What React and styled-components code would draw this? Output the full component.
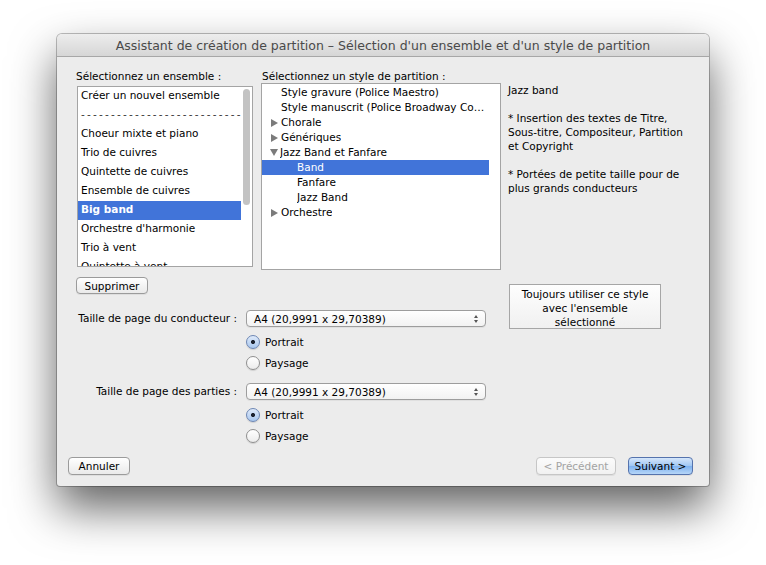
import React from 'react';
import styled, { createGlobalStyle } from 'styled-components';

const GlobalStyle = createGlobalStyle`
  html, body {
    margin: 0;
    padding: 0;
    background: #fff;
  }
  body {
    font-family: "DejaVu Sans", Verdana, sans-serif;
    font-size: 10.5px;
    color: #000;
  }
  * { box-sizing: border-box; }
`;

const Desktop = styled.div`
  width: 766px;
  height: 565px;
  padding: 34px 0 0 57px;
  overflow: hidden;
`;

const Window = styled.div`
  width: 652px;
  height: 452px;
  display: flex;
  flex-direction: column;
  background: #ececec;
  border-radius: 5px 5px 3px 3px;
  box-shadow: 0 0 0 1px rgba(0, 0, 0, 0.25), 0 22px 46px rgba(0, 0, 0, 0.62);
  overflow: hidden;
`;

const TitleBar = styled.div`
  height: 23px;
  flex: none;
  display: flex;
  align-items: center;
  justify-content: center;
  padding-top: 1px;
  background: linear-gradient(#ededed, #d6d6d6);
  border-bottom: 1px solid #a7a7a7;
  color: #4a4a4a;
  font-size: 12.5px;
  white-space: nowrap;
`;

const Body = styled.div`
  flex: 1;
  display: flex;
  flex-direction: column;
  padding: 12px 0 0 19px;
`;

const TopGrid = styled.div`
  display: grid;
  grid-template-columns: 177px 240px 153px;
  column-gap: 8px;
  align-items: start;
`;

const Label = styled.div`
  line-height: 14px;
  white-space: nowrap;
  padding-left: ${p => p.$indent || 0}px;
`;

const ListBox = styled.div`
  display: flex;
  margin-top: ${p => p.$top}px;
  margin-left: ${p => p.$left || 0}px;
  height: ${p => p.$height}px;
  background: #fff;
  border: 1px solid #a4a4a4;
  overflow: hidden;
`;

const Rows = styled.div`
  flex: 1;
  min-width: 0;
  padding-top: ${p => p.$pad || 0}px;
  overflow: hidden;
`;

const Gutter = styled.div`
  width: ${p => p.$width}px;
  flex: none;
  padding: 2px 2px 0;
`;

const Thumb = styled.div`
  height: 116px;
  border-radius: 4px;
  background: #c3c3c3;
`;

const ListRow = styled.div`
  height: 19px;
  line-height: 17px;
  padding-left: 3px;
  white-space: nowrap;
  overflow: hidden;
  letter-spacing: ${p => (p.$dashes ? '2.2px' : 'normal')};
  background: ${p => (p.$selected ? '#4174d9' : 'transparent')};
  color: ${p => (p.$selected ? '#fff' : p.$dashes ? '#333' : '#000')};
  font-weight: ${p => (p.$selected ? 'bold' : 'normal')};
`;

const TreeRow = styled.div`
  display: flex;
  align-items: center;
  height: 15px;
  padding-left: ${p => 9 + p.$level * 16}px;
  padding-right: 3px;
  white-space: nowrap;
  background: ${p => (p.$selected ? '#4174d9' : 'transparent')};
  color: ${p => (p.$selected ? '#fff' : '#000')};
`;

const Disclosure = styled.span`
  width: 10px;
  flex: none;
  display: flex;
  align-items: center;
  margin-left: ${p => (p.$open ? -1 : 0)}px;

  &::before {
    content: '';
    display: ${p => (p.$shown ? 'block' : 'none')};
    border-style: solid;
    border-color: transparent;
    ${p =>
      p.$open
        ? 'border-width: 7px 4.5px 0 4.5px; border-top-color: #7b7b7b;'
        : 'border-width: 4.5px 0 4.5px 7px; border-left-color: #7b7b7b;'}
  }
`;

const TreeText = styled.span`
  overflow: hidden;
  text-overflow: ellipsis;
  line-height: 15px;
`;

const Description = styled.div`
  margin-left: -1px;
  line-height: 14px;
  white-space: nowrap;
`;

const Para = styled.p`
  margin: 0 0 14px;
`;

const Lower = styled.div`
  display: flex;
  margin-top: 7px;
`;

const LowerLeft = styled.div`
  width: 425px;
  flex: none;
`;

const PushButton = styled.button`
  height: ${p => p.$height || 18}px;
  width: ${p => p.$width}px;
  padding: 0;
  font: inherit;
  line-height: 14px;
  color: ${p => (p.$disabled ? '#a3a3a3' : '#000')};
  border: 1px solid ${p => (p.$default ? '#5573ad' : p.$disabled ? '#c6c6c6' : '#9b9b9b')};
  border-radius: 4px;
  background: ${p =>
    p.$default
      ? 'linear-gradient(#d5e6fb, #a2c8f3 48%, #7fb2ef 52%, #b6d6f8)'
      : p.$disabled
      ? 'linear-gradient(#fbfbfb, #f1f1f1)'
      : 'linear-gradient(#ffffff, #f4f4f4 50%, #eaeaea)'};
  box-shadow: 0 1px 0 rgba(0, 0, 0, 0.06);
  white-space: nowrap;
`;

const SquareButton = styled.div`
  width: 152px;
  height: 45px;
  margin: 7px 0 0 8px;
  padding-top: 2px;
  border: 1px solid #a6a6a6;
  background: linear-gradient(#fefefe, #f0f0f0);
  text-align: center;
  line-height: 14px;
`;

const Form = styled.div`
  display: grid;
  grid-template-columns: 161px 240px;
  column-gap: 9px;
  margin-top: 16px;
  align-items: center;
`;

const FieldLabel = styled.div`
  text-align: right;
  white-space: nowrap;
  line-height: 17px;
`;

const Popup = styled.div`
  height: 17px;
  display: flex;
  align-items: center;
  justify-content: space-between;
  padding: 0 7px 0 7px;
  border: 1px solid #9d9d9d;
  border-radius: 4px;
  background: linear-gradient(#ffffff, #f2f2f2);
  box-shadow: 0 1px 0 rgba(0, 0, 0, 0.05);
  white-space: nowrap;
`;

const Steppers = styled.span`
  display: flex;
  flex-direction: column;
  gap: 2px;

  &::before,
  &::after {
    content: '';
    border-style: solid;
    border-color: transparent;
  }
  &::before {
    border-width: 0 2.5px 3px 2.5px;
    border-bottom-color: #555;
  }
  &::after {
    border-width: 3px 2.5px 0 2.5px;
    border-top-color: #555;
  }
`;

const RadioGroup = styled.div`
  grid-column: 2;
  display: flex;
  flex-direction: column;
  gap: 7px;
  margin: 8px 0 ${p => p.$after}px;
`;

const RadioRow = styled.div`
  display: flex;
  align-items: center;
  gap: 5px;
  height: 14px;
`;

const RadioDot = styled.span`
  width: 14px;
  height: 14px;
  flex: none;
  border-radius: 50%;
  border: 1px solid ${p => (p.$checked ? '#6d86b3' : '#8f8f8f')};
  background: ${p =>
    p.$checked
      ? 'radial-gradient(circle, #1d2330 0 1.8px, transparent 2.3px), linear-gradient(#dfeafa, #a9c7ee)'
      : 'linear-gradient(#ffffff, #ececec)'};
  box-shadow: 0 1px 1px rgba(0, 0, 0, 0.12);
`;

const Footer = styled.div`
  margin-top: auto;
  display: flex;
  align-items: center;
  gap: 12px;
  margin-left: -8px;
  padding: 0 16px 11px 0;
`;

const Spacer = styled.div`
  flex: 1;
`;

const ensembles = [
  { label: 'Créer un nouvel ensemble' },
  { label: '-'.repeat(40), dashes: true },
  { label: 'Choeur mixte et piano' },
  { label: 'Trio de cuivres' },
  { label: 'Quintette de cuivres' },
  { label: 'Ensemble de cuivres' },
  { label: 'Big band', selected: true },
  { label: "Orchestre d'harmonie" },
  { label: 'Trio à vent' },
  { label: 'Quintette à vent' },
  { label: 'Quatuor à cordes' },
];

const styles = [
  { label: 'Style gravure (Police Maestro)', level: 0 },
  { label: 'Style manuscrit (Police Broadway Copyist)', level: 0 },
  { label: 'Chorale', level: 0, folder: true },
  { label: 'Génériques', level: 0, folder: true },
  { label: 'Jazz Band et Fanfare', level: 0, folder: true, open: true },
  { label: 'Band', level: 1, selected: true },
  { label: 'Fanfare', level: 1 },
  { label: 'Jazz Band', level: 1 },
  { label: 'Orchestre', level: 0, folder: true },
];

const PageSize = ({ label, after }) => (
  <>
    <FieldLabel>{label}</FieldLabel>
    <Popup>
      <span>A4 (20,9991 x 29,70389)</span>
      <Steppers />
    </Popup>
    <RadioGroup $after={after}>
      <RadioRow>
        <RadioDot $checked />
        Portrait
      </RadioRow>
      <RadioRow>
        <RadioDot />
        Paysage
      </RadioRow>
    </RadioGroup>
  </>
);

export default function App() {
  return (
    <Desktop>
      <GlobalStyle />
      <Window>
        <TitleBar>
          Assistant de création de partition – Sélection d'un ensemble et d'un style de partition
        </TitleBar>
        <Body>
          <TopGrid>
            <Label>Sélectionnez un ensemble :</Label>
            <Label $indent={1}>Sélectionnez un style de partition :</Label>
            <div />

            <ListBox $top={3} $left={1} $height={181}>
              <Rows>
                {ensembles.map((e, i) => (
                  <ListRow key={i} $selected={e.selected} $dashes={e.dashes}>
                    {e.label}
                  </ListRow>
                ))}
              </Rows>
              <Gutter $width={11}>
                <Thumb />
              </Gutter>
            </ListBox>

            <ListBox $top={0} $height={187}>
              <Rows $pad={1}>
                {styles.map((s, i) => (
                  <TreeRow key={i} $level={s.level} $selected={s.selected}>
                    <Disclosure $shown={s.folder} $open={s.open} />
                    <TreeText>{s.label}</TreeText>
                  </TreeRow>
                ))}
              </Rows>
              <Gutter $width={11} />
            </ListBox>

            <Description>
              <Para>Jazz band</Para>
              <Para>
                * Insertion des textes de Titre,
                <br />
                Sous-titre, Compositeur, Partition
                <br />
                et Copyright
              </Para>
              <Para>
                * Portées de petite taille pour de
                <br />
                plus grands conducteurs
              </Para>
            </Description>
          </TopGrid>

          <Lower>
            <LowerLeft>
              <PushButton $width={72} $height={17}>Supprimer</PushButton>
              <Form>
                <PageSize label="Taille de page du conducteur :" after={13} />
                <PageSize label="Taille de page des parties :" after={0} />
              </Form>
            </LowerLeft>
            <SquareButton>
              Toujours utiliser ce style
              <br />
              avec l'ensemble
              <br />
              sélectionné
            </SquareButton>
          </Lower>

          <Footer>
            <PushButton $width={62}>Annuler</PushButton>
            <Spacer />
            <PushButton $width={80} $disabled>
              &lt; Précédent
            </PushButton>
            <PushButton $width={65} $default>
              Suivant &gt;
            </PushButton>
          </Footer>
        </Body>
      </Window>
    </Desktop>
  );
}
